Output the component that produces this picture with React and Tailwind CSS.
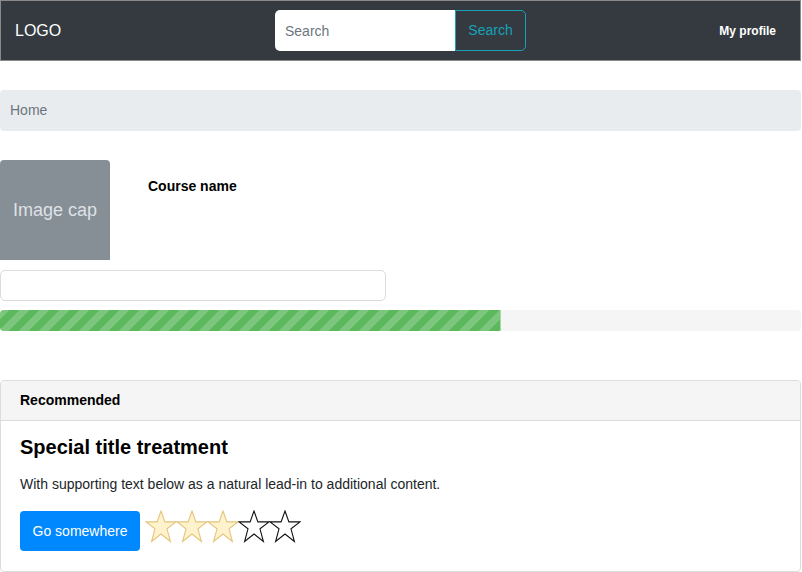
import React from "react";

const Star = ({ filled }) => (
  <svg width="32" height="33" viewBox="0 0 32 33" className="-mr-[1px]">
    <polygon
      points="16,1 19.9,11.9 31,11.9 22,18.8 25.4,31.5 16,24 6.6,31.5 10,18.8 1,11.9 12.1,11.9"
      fill={filled ? "#fff3cd" : "white"}
      stroke={filled ? "#e4c57a" : "#111"}
      strokeWidth="1.1"
      strokeLinejoin="miter"
    />
  </svg>
);

const App = () => {
  const rating = 3;
  return (
    <div className="w-[802px] h-[572px] bg-white font-['Liberation_Sans',Arial,sans-serif] text-black overflow-hidden">
      <nav className="h-[61px] w-[801px] bg-[#343a40] border border-[#8a8a8a] flex items-center pl-[14px] pr-[24px]">
        <div className="text-white text-[16px] w-[260px]">LOGO</div>
        <div className="flex">
          <input
            type="text"
            placeholder="Search"
            className="w-[180px] h-[41px] bg-white rounded-l-[5px] px-[10px] text-[14px] placeholder-[#6c757d] outline-none"
          />
          <button className="h-[41px] w-[71px] border border-[#17a2b8] rounded-r-[5px] text-[#17a2b8] text-[14px]">
            Search
          </button>
        </div>
        <div className="ml-auto text-white text-[12px] font-bold">My profile</div>
      </nav>

      <div className="mt-[29px] h-[41px] w-[801px] bg-[#e9ecef] rounded-[4px] flex items-center px-[10px] text-[14px] text-[#6c757d]">
        Home
      </div>

      <div className="mt-[29px] flex">
        <div className="w-[110px] h-[100px] bg-[#868e96] rounded-t-[4px] flex items-center justify-center text-[#dee2e6] text-[18px]">
          Image cap
        </div>
        <div className="ml-[38px] pt-[16px] text-[14px] font-bold">Course name</div>
      </div>

      <input
        type="text"
        className="mt-[10px] block w-[386px] h-[31px] border border-[#dcdcdc] rounded-[5px] outline-none"
      />

      <div className="mt-[9px] h-[21px] w-[801px] bg-[#f5f5f5] rounded-[4px] overflow-hidden flex">
        <div className="w-[501px] h-full bg-[#5cb85c] bg-[linear-gradient(135deg,rgba(255,255,255,.2)_25%,transparent_25%,transparent_50%,rgba(255,255,255,.2)_50%,rgba(255,255,255,.2)_75%,transparent_75%,transparent)] bg-[length:20px_20px] border-r border-[#a6d9a6]" />
      </div>

      <div className="mt-[49px] w-[801px] border border-[#dcdcdc] rounded-[4px] overflow-hidden">
        <div className="h-[40px] bg-[#f5f5f5] border-b border-[#dcdcdc] flex items-center px-[19px] text-[14px] font-bold">
          Recommended
        </div>
        <div className="px-[19px] pt-[14px] pb-[20px]">
          <h5 className="text-[20px] font-bold leading-[24px]">Special title treatment</h5>
          <p className="mt-[15px] text-[14px] text-[#212529] leading-[20px]">
            With supporting text below as a natural lead-in to additional content.
          </p>
          <div className="mt-[17px] flex items-start">
            <button className="h-[40px] w-[120px] bg-[#0088ff] rounded-[4px] text-white text-[14px]">
              Go somewhere
            </button>
            <div className="flex ml-[5px] -mt-[1px]">
              {[1, 2, 3, 4, 5].map((i) => (
                <Star key={i} filled={i <= rating} />
              ))}
            </div>
          </div>
        </div>
      </div>
    </div>
  );
};

export default App;
